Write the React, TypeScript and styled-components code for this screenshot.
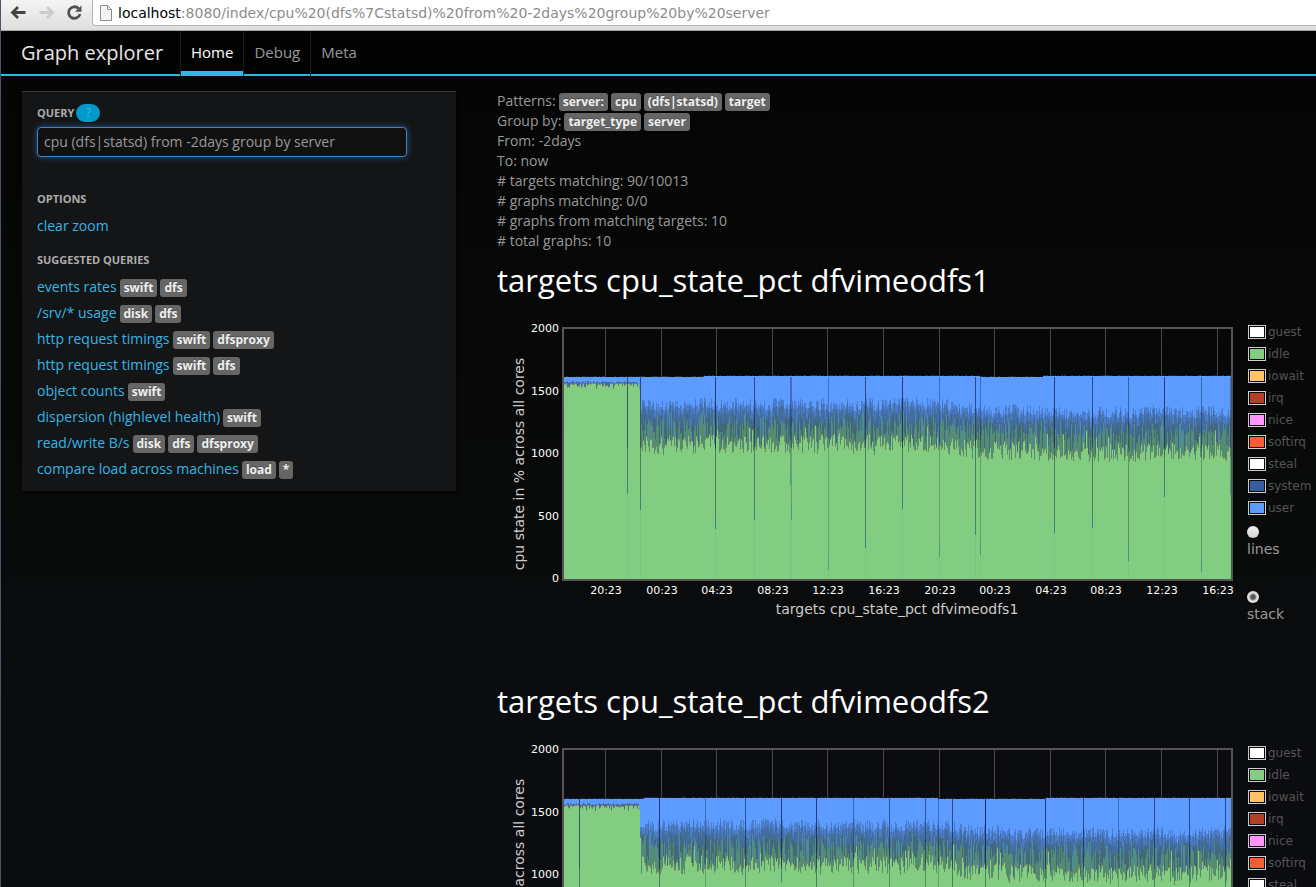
import React, { useMemo, useState } from "react";
import styled, { createGlobalStyle, css } from "styled-components";

const sans = `"Open Sans", "Noto Sans", sans-serif`;
const dejavu = `"DejaVu Sans", sans-serif`;

const GlobalStyle = createGlobalStyle`
  *, *::before, *::after { box-sizing: border-box; }
  body {
    margin: 0;
    background: #060606;
    color: #999;
    font: 14px/20px ${sans};
  }
  a { text-decoration: none; }
`;

/* ---------- window ---------- */

const Window = styled.div`
  display: flex;
  flex-direction: column;
  height: 100vh;
  border-left: 1px solid #46566c;
`;

const BrowserBar = styled.header`
  display: flex;
  flex: none;
  align-items: flex-start;
  height: 31px;
  padding-left: 8px;
  background: linear-gradient(#f4f4f4, #dedede);
  border-bottom: 1px solid #a5a5a5;
  overflow: hidden;
`;

const BarButton = styled.button`
  width: 28px;
  height: 24px;
  padding: 0;
  border: 0;
  background: none;
  line-height: 0;
  text-align: left;
`;

const AddressBox = styled.div`
  display: flex;
  flex: 1;
  align-items: center;
  gap: 6px;
  height: 26px;
  margin: 0 -10px 0 -1px;
  padding-left: 7px;
  background: #fff;
  border: 1px solid #b4b4b4;
  border-top: 0;
  border-radius: 0 0 4px 4px;
`;

const Address = styled.span`
  font: 14px/20px ${dejavu};
  color: #8c8c8c;
  white-space: nowrap;
`;

const Host = styled.span`
  color: #000;
`;

const Page = styled.div`
  flex: 1;
  min-height: 0;
  overflow-y: auto;
  scrollbar-width: none;
  background: linear-gradient(#040404 0, #080a09 420px, #0b0c0f 680px);
`;

/* ---------- navigation ---------- */

const Navbar = styled.nav`
  display: flex;
  height: 45px;
  padding-left: 20px;
  background: #020202;
  border-bottom: 2px solid #33b5e5;
`;

const Brand = styled.a`
  width: 159px;
  color: #e6e6e6;
  font-size: 20px;
  line-height: 43px;
`;

const NavLink = styled.a<{ $active?: boolean }>`
  height: 45px;
  padding: 0 10px;
  border-left: 1px solid #1c1c1c;
  font-size: 15px;
  line-height: 43px;
  color: #999;
  ${(p) =>
    p.$active &&
    css`
      color: #fff;
      box-shadow: inset 0 -5px #33b5e5;
    `}
`;

/* ---------- columns ---------- */

const Columns = styled.div`
  display: flex;
  align-items: flex-start;
  gap: 41px;
  padding: 15px 0 0 21px;
`;

const Sidebar = styled.aside`
  flex: none;
  width: 434px;
  padding: 11px 15px 0;
  background: #141517;
  border-top: 1px solid #3a3a3c;
  box-shadow: 0 1px 4px #000;
`;

const headingText = css`
  margin: 0;
  font-size: 11px;
  line-height: 20px;
  font-weight: 700;
  color: #adadad;
  text-transform: uppercase;
`;

const QueryHead = styled.div`
  display: flex;
  align-items: center;
  gap: 2px;
  height: 20px;
`;

const QueryLabel = styled.label`
  ${headingText}
`;

const Help = styled.button`
  width: 24px;
  height: 18px;
  padding: 0;
  border: 0;
  border-radius: 9px;
  background: #0099cc;
  color: #4db8e0;
  font: 12px/18px ${sans};
`;

const QueryInput = styled.input`
  display: block;
  width: 370px;
  height: 30px;
  margin: 4px 0 32px;
  padding: 0 6px 1px;
  border: 1px solid #3c84c8;
  border-radius: 4px;
  outline: 0;
  background: #111;
  color: #999;
  font: 14px/20px ${sans};
  box-shadow: 0 0 6px rgba(60, 132, 200, 0.6);
`;

const SideHeading = styled.h2`
  ${headingText}
`;

const Links = styled.ul`
  margin: 4px 0 11px;
  padding: 0;
  list-style: none;
  &:last-child {
    margin-bottom: 9px;
  }
`;

const LinkRow = styled.li`
  display: flex;
  align-items: center;
  gap: 3px;
  height: 26px;
  white-space: nowrap;
`;

const Link = styled.a`
  color: #33b5e5;
`;

const Tag = styled.span`
  display: inline-block;
  height: 18px;
  margin-top: 2px;
  padding: 0 4px;
  border-radius: 3px;
  background: #666;
  color: #f0f0f0;
  font-size: 12px;
  line-height: 18px;
  font-weight: 700;
  text-shadow: 0 -1px rgba(0, 0, 0, 0.25);
`;

const Main = styled.main`
  flex: 1;
  min-width: 0;
`;

const Facts = styled.div`
  margin-bottom: 9px;
`;

const Fact = styled.div`
  display: flex;
  align-items: center;
  gap: 3px;
  height: 20px;
  white-space: nowrap;
`;

/* ---------- graphs ---------- */

const Graph = styled.section`
  height: 421px;
`;

const Title = styled.h1`
  margin: 0 0 20px;
  color: #fff;
  font-size: 31px;
  line-height: 40px;
  font-weight: 400;
  white-space: nowrap;
`;

const GraphRow = styled.div`
  display: flex;
  gap: 7px;
`;

const Chart = styled.svg`
  flex: none;
  display: block;
  font-family: ${dejavu};
`;

const Side = styled.div`
  flex: none;
  padding-top: 1px;
  font: 12px/22px ${dejavu};
  color: #545454;
`;

const Legend = styled.ul`
  margin: 0 0 7px;
  padding: 0;
  list-style: none;
`;

const LegendItem = styled.li`
  display: flex;
  align-items: center;
  gap: 2px;
  height: 22px;
  padding-left: 1px;
`;

const Swatch = styled.span<{ $color: string }>`
  width: 18px;
  height: 14px;
  border: 1px solid #ccc;
  padding: 1px;
  background: ${(p) => p.$color} content-box;
`;

const Mode = styled.label`
  display: flex;
  flex-direction: column;
  align-items: flex-start;
  height: 65px;
  color: #999;
  font-size: 14px;
  line-height: 20px;
`;

const Radio = styled.input`
  appearance: none;
  width: 12px;
  height: 12px;
  margin: 0 0 1px;
  border-radius: 50%;
  background: linear-gradient(#eee, #d4d4d4);
  &:checked {
    background: radial-gradient(circle, #555 0 2px, #ddd 4px);
  }
`;

/* ---------- data ---------- */

const series: [string, string][] = [
  ["guest", "#ffffff"],
  ["idle", "#82cd82"],
  ["iowait", "#ffc266"],
  ["irq", "#b23f26"],
  ["nice", "#ff94ff"],
  ["softirq", "#ff5b33"],
  ["steal", "#ffffff"],
  ["system", "#365d9c"],
  ["user", "#5c9bff"],
];

const suggestions: [string, string[]][] = [
  ["events rates", ["swift", "dfs"]],
  ["/srv/* usage", ["disk", "dfs"]],
  ["http request timings", ["swift", "dfsproxy"]],
  ["http request timings", ["swift", "dfs"]],
  ["object counts", ["swift"]],
  ["dispersion (highlevel health)", ["swift"]],
  ["read/write B/s", ["disk", "dfs", "dfsproxy"]],
  ["compare load across machines", ["load", "*"]],
];

const facts: [string, string[]][] = [
  ["Patterns:", ["server:", "cpu", "(dfs|statsd)", "target"]],
  ["Group by:", ["target_type", "server"]],
  ["From: -2days", []],
  ["To: now", []],
  ["# targets matching: 90/10013", []],
  ["# graphs matching: 0/0", []],
  ["# graphs from matching targets: 10", []],
  ["# total graphs: 10", []],
];

const hours = ["20:23", "00:23", "04:23", "08:23", "12:23", "16:23"];

/* A drop: column, depth in the plot, strength of the line */
type Drop = [number, number, number];

interface GraphData {
  name: string;
  seed: number;
  drops: Drop[];
  /* columns where the total gets a pixel higher or lower */
  steps: [number, number][];
}

const graphs: GraphData[] = [
  {
    name: "dfvimeodfs1",
    seed: 7,
    drops: [
      [63, 165, 0.6], [76, 181, 0.6], [151, 200, 0.7], [190, 191, 0.6],
      [226, 156, 0.3], [227, 191, 0.3], [264, 241, 0.25], [301, 219, 0.6],
      [338, 180, 0.7], [375, 228, 0.3], [411, 206, 0.6], [416, 226, 0.3],
      [490, 204, 0.7], [528, 199, 0.6], [564, 232, 0.4], [600, 168, 0.7],
      [637, 243, 0.35], [666, 166, 0.3],
    ],
    steps: [[0, 48], [140, 47], [416, 48], [479, 47]],
  },
  {
    name: "dfvimeodfs2",
    seed: 23,
    drops: [
      [15, 230, 0.6], [95, 240, 0.7], [141, 210, 0.3], [181, 190, 0.5],
      [217, 132, 0.7], [252, 220, 0.7], [289, 226, 0.4], [325, 200, 0.5],
      [361, 238, 0.5], [374, 240, 0.3], [388, 190, 0.6], [421, 244, 0.8],
      [481, 230, 0.7], [519, 190, 0.6], [554, 240, 0.3], [590, 216, 0.6],
      [625, 232, 0.6], [661, 210, 0.6],
    ],
    steps: [[0, 49], [80, 48], [374, 49], [481, 48]],
  },
];

const PLOT_W = 667;
const PLOT_H = 250;
const layerColors = {
  total: "#5c9bff",
  high: "#4c7dca",
  system: "#426ea2",
  mix: "#41697a",
  teal: "#508b99",
  low: "#558b6e",
  idle: "#82cd82",
  rim: "#8f8650",
  edge: "#1c3157",
};
type Layer = keyof typeof layerColors;

function random(seed: number) {
  let s = seed * 7919;
  return () => {
    s = (s * 1664525 + 1013904223) % 4294967296;
    return s / 4294967296;
  };
}

/* Builds one path of one-pixel columns for each shade of the stacked areas. */
function buildLayers({ seed, steps }: GraphData): [Layer, string][] {
  const rnd = random(seed);
  const paths = {} as Record<Layer, string>;
  (Object.keys(layerColors) as Layer[]).forEach((k) => (paths[k] = ""));
  const bar = (k: Layer, x: number, from: number, to: number) => {
    const a = Math.round(from);
    const b = Math.round(to);
    if (b > a) paths[k] += `M${x} ${a}h1V${b}h-1z`;
  };
  let wave = 0;
  for (let x = 0; x < PLOT_W; x++) {
    const top = steps.filter(([at]) => at <= x).pop()![1];
    if (rnd() < 0.45) bar("edge", x, top - 1, top);
    if (x < 75) {
      const a = top + 4 + rnd() * 2;
      const b = top + 6 + Math.pow(rnd(), 3) * 5;
      bar("total", x, top, a);
      bar("system", x, a, b);
      bar("rim", x, b, b + 1);
      bar("idle", x, b + 1, PLOT_H);
      continue;
    }
    const settle = x < 77 ? (77 - x) * -30 : 0;
    const late = Math.min(8, Math.max(0, (x - 375) / 8));
    wave = wave * 0.85 + (rnd() - 0.5) * 2;
    const shift = late + wave;
    const high = 75 + shift + (rnd() - 0.5) * 12;
    const sys = high + 3 + rnd() * 7;
    const mid = 82 + shift + rnd() * 16;
    const low = 90 + shift + rnd() * 28;
    const idle =
      115 + shift * 1.1 + (rnd() - 0.5) * 18 - (rnd() < 0.1 ? rnd() * 18 : 0) + settle;
    bar("total", x, top, Math.min(high, idle));
    bar("high", x, high, Math.min(sys, idle));
    bar("system", x, sys, Math.min(mid, idle));
    bar(rnd() < 0.3 ? "teal" : "mix", x, Math.max(sys, mid), Math.min(low, idle));
    bar("low", x, Math.max(low, mid, sys), idle);
    bar("rim", x, idle - 1, idle);
    bar("idle", x, idle, PLOT_H);
  }
  return Object.entries(paths) as [Layer, string][];
}

/* ---------- components ---------- */

const StackedChart = ({ data }: { data: GraphData }) => {
  const layers = useMemo(() => buildLayers(data), [data]);
  const ticks = Array.from({ length: 12 }, (_, i) => Math.round(41 + i * 55.6));
  return (
    <Chart width="743" height="300" role="img" aria-label={`cpu state of ${data.name}`}>
      <g fill="#fff" fontSize="11" textAnchor="end">
        {[2000, 1500, 1000, 500, 0].map((v, i) => (
          <text key={v} x="62" y={Math.round(12 + i * 62.5)}>{v}</text>
        ))}
      </g>
      <g transform="translate(67 9)" shapeRendering="crispEdges">
        {ticks.map((x) => (
          <rect key={x} x={x} y="0" width="1" height={PLOT_H} fill="#484848" />
        ))}
        {layers.map(([k, d]) => (
          <path key={k} d={d} fill={layerColors[k]} />
        ))}
        {data.drops.map(([x, depth, strength]) => (
          <g key={x}>
            <rect x={x} y="48" width="1" height="71" fill="#142850" opacity={strength + 0.1} />
            <rect x={x} y="119" width="1" height={depth - 119} fill="#2b6450" opacity={Math.min(0.7, strength + 0.1)} />
            <rect x={x} y={depth - 14} width="1" height="14" fill="#3f86b0" opacity="0.4" />
            <rect x={x} y={depth} width="1" height={PLOT_H - depth} fill="#4c8a5c" opacity="0.12" />
          </g>
        ))}
        <rect x="-1" y="-1" width="669" height="252" fill="none" stroke="#545454" strokeWidth="2" />
      </g>
      <g fill="#fff" fontSize="11" textAnchor="middle">
        {ticks.map((x, i) => (
          <text key={x} x={x + 68} y="274">{hours[i % 6]}</text>
        ))}
      </g>
      <g fill="#ccc" fontSize="14" textAnchor="middle">
        <text x="400" y="294">targets cpu_state_pct {data.name}</text>
        <text transform="translate(27 144) rotate(-90)">cpu state in % across all cores</text>
      </g>
    </Chart>
  );
};

const GraphSection = ({ data }: { data: GraphData }) => {
  const [mode, setMode] = useState("stack");
  return (
    <Graph>
      <Title>targets cpu_state_pct {data.name}</Title>
      <GraphRow>
        <StackedChart data={data} />
        <Side>
          <Legend>
            {series.map(([name, color]) => (
              <LegendItem key={name}>
                <Swatch $color={color} />
                {name}
              </LegendItem>
            ))}
          </Legend>
          {["lines", "stack"].map((m) => (
            <Mode key={m}>
              <Radio
                type="radio"
                name={`mode-${data.name}`}
                checked={mode === m}
                onChange={() => setMode(m)}
              />
              {m}
            </Mode>
          ))}
        </Side>
      </GraphRow>
    </Graph>
  );
};

const Arrow = ({ color, flip }: { color: string; flip?: boolean }) => (
  <svg width="18" height="24" viewBox="0 0 18 24">
    <path
      d="M9 7L3.500 12.500L9 18M4 12.500H16.500"
      transform={flip ? "translate(19 0) scale(-1 1)" : undefined}
      fill="none"
      stroke={color}
      strokeWidth="2.800"
    />
  </svg>
);

export default function App() {
  const [query, setQuery] = useState("cpu (dfs|statsd) from -2days group by server");
  return (
    <Window>
      <GlobalStyle />
      <BrowserBar>
        <BarButton aria-label="Back"><Arrow color="#444" /></BarButton>
        <BarButton aria-label="Forward"><Arrow color="#ccc" flip /></BarButton>
        <BarButton aria-label="Reload">
          <svg width="18" height="24" viewBox="0 0 18 24">
            <path d="M13.500 8.500A5.800 5.800 0 1 0 15 14" fill="none" stroke="#505050" strokeWidth="2.800" />
            <path d="M16.500 5.500V11.800H10z" fill="#505050" />
          </svg>
        </BarButton>
        <AddressBox>
          <svg width="12" height="16" viewBox="0 0 12 16">
            <path d="M.5 .5H7.500L11.500 4.500V15.500H.5zM7.500 .5V4.500H11.500" fill="#f4f4f4" stroke="#8c8c8c" />
          </svg>
          <Address>
            <Host>localhost</Host>:8080/index/cpu%20(dfs%7Cstatsd)%20from%20-2days%20group%20by%20server
          </Address>
        </AddressBox>
      </BrowserBar>
      <Page>
        <Navbar>
          <Brand href="#">Graph explorer</Brand>
          <NavLink href="#home" $active>Home</NavLink>
          <NavLink href="#debug">Debug</NavLink>
          <NavLink href="#meta">Meta</NavLink>
        </Navbar>
        <Columns>
          <Sidebar>
            <QueryHead>
              <QueryLabel htmlFor="query">Query</QueryLabel>
              <Help type="button">?</Help>
            </QueryHead>
            <QueryInput id="query" value={query} onChange={(e) => setQuery(e.target.value)} />
            <SideHeading>Options</SideHeading>
            <Links>
              <LinkRow><Link href="#clear">clear zoom</Link></LinkRow>
            </Links>
            <SideHeading>Suggested queries</SideHeading>
            <Links>
              {suggestions.map(([text, tags], i) => (
                <LinkRow key={i}>
                  <Link href="#query">{text}</Link>
                  {tags.map((t) => <Tag key={t}>{t}</Tag>)}
                </LinkRow>
              ))}
            </Links>
          </Sidebar>
          <Main>
            <Facts>
              {facts.map(([text, tags]) => (
                <Fact key={text}>
                  {text}
                  {tags.map((t) => <Tag key={t}>{t}</Tag>)}
                </Fact>
              ))}
            </Facts>
            {graphs.map((g) => <GraphSection key={g.name} data={g} />)}
          </Main>
        </Columns>
      </Page>
    </Window>
  );
}
